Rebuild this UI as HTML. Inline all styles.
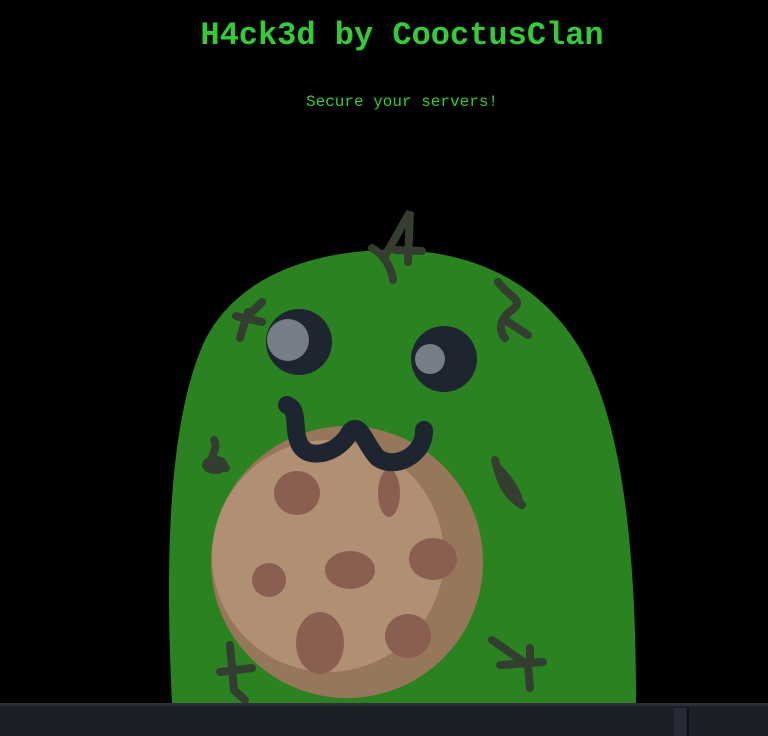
<!DOCTYPE html>
<html><head><style>
html,body{margin:0;padding:0;background:#000;width:768px;height:736px;overflow:hidden}
.t{position:absolute;left:0;width:804px;text-align:center;font-family:"Liberation Mono",monospace;color:#32cd32}
h1{margin:0;top:16px;font-size:32px;font-weight:bold;line-height:40px}
p{margin:0;top:92px;font-size:16px;line-height:20px}
svg{position:absolute;left:0;top:0}
</style></head><body>
<h1 class="t">H4ck3d by CooctusClan</h1>
<p class="t">Secure your servers!</p>
<svg width="768" height="736" viewBox="0 0 768 736">
<path d="M172,704 C165,560 168,420 205,340 C240,272 320,250 392,250 C470,250 540,280 582,352 C625,430 636,560 636,704 Z" fill="#2b8220"/>
<circle cx="347" cy="562" r="136" fill="#97775a"/>
<circle cx="328" cy="556" r="116" fill="#b08f72"/>
<g fill="#8a5f52">
<ellipse cx="297" cy="493" rx="23" ry="22"/>
<ellipse cx="389" cy="493" rx="11" ry="24"/>
<ellipse cx="350" cy="570" rx="25" ry="19"/>
<ellipse cx="433" cy="559" rx="24" ry="21"/>
<ellipse cx="269" cy="580" rx="17" ry="17"/>
<ellipse cx="320" cy="643" rx="24" ry="31"/>
<ellipse cx="408" cy="636" rx="23" ry="22"/>
</g>
<circle cx="299" cy="342" r="33" fill="#1d2530"/>
<circle cx="288" cy="340" r="21" fill="#767d87"/>
<circle cx="444" cy="359" r="33" fill="#1d2530"/>
<circle cx="430" cy="359" r="15" fill="#767d87"/>
<path d="M287,405 C300,410 292,430 300,445 C310,462 340,452 350,432 C360,420 365,445 378,458 C395,470 425,455 424,430" fill="none" stroke="#1d2530" stroke-width="18" stroke-linecap="round" stroke-linejoin="round"/>
<g fill="none" stroke="#333d30" stroke-width="8" stroke-linecap="round">
<path d="M372,248 C385,255 392,270 393,280 M385,256 L410,212 L408,262 M395,250 L422,251"/>
<path d="M240,338 L248,312 M236,316 L262,322 M252,312 L262,302"/>
<path d="M498,282 C510,298 525,300 512,310 C500,318 498,330 505,338 M505,320 L528,335"/>
<path d="M214,440 C220,450 205,460 215,468 L226,468"/>
<path d="M495,460 C500,480 505,495 522,505"/>
<path d="M230,645 L234,690 L245,700 M220,672 L252,668"/>
<path d="M492,640 L528,665 L530,688 M500,665 L543,662 M530,648 L530,660"/>
</g>
<path d="M494,460 C510,470 528,500 522,506 C510,500 500,490 498,480 Z" fill="#333d30"/>
<ellipse cx="215" cy="465" rx="13" ry="9" fill="#333d30"/>
<rect x="0" y="703" width="768" height="33" fill="#1b1f28"/>
<rect x="0" y="703" width="768" height="3" fill="#2b2f39"/>
<rect x="674" y="708" width="12" height="28" fill="#262a34"/>
<rect x="687" y="708" width="2" height="28" fill="#111"/>
</svg>
</body></html>
